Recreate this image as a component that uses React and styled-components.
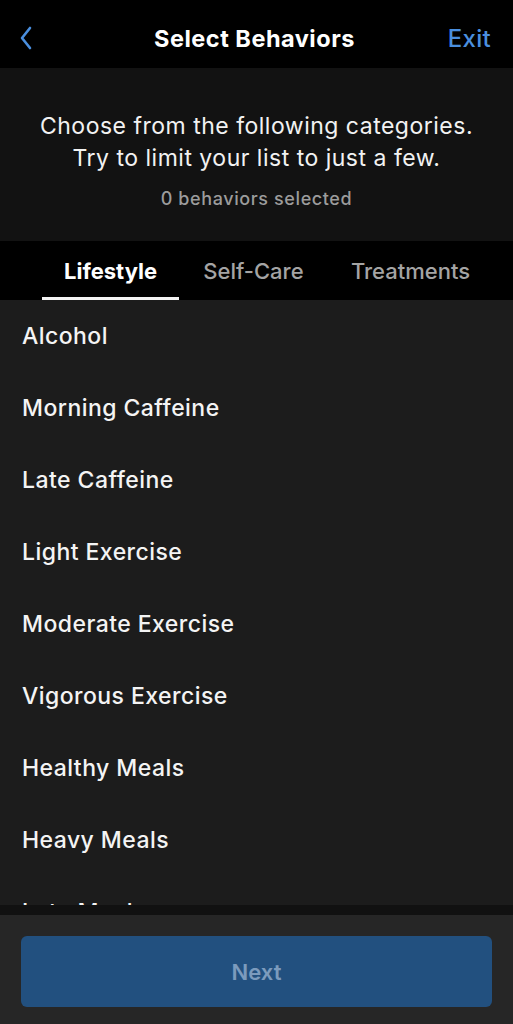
import React, { useState } from "react";
import styled, { createGlobalStyle } from "styled-components";

const GlobalStyle = createGlobalStyle`
  html, body {
    margin: 0;
    padding: 0;
    background: #000;
  }
  * {
    box-sizing: border-box;
  }
  body {
    font-family: Inter, "Liberation Sans", sans-serif;
    -webkit-font-smoothing: antialiased;
  }
`;

const Screen = styled.div`
  display: flex;
  flex-direction: column;
  width: 513px;
  height: 1024px;
  overflow: hidden;
  background: #1c1c1c;
`;

const NavBar = styled.div`
  display: grid;
  grid-template-columns: 80px 1fr 80px;
  align-items: center;
  height: 68px;
  padding: 8px 22px 0 18px;
  background: #000;
`;

const BackButton = styled.button`
  display: flex;
  align-items: center;
  padding: 0;
  border: none;
  background: none;
  color: #4a8fdf;
  cursor: pointer;
`;

const Title = styled.h1`
  margin: 0;
  text-align: center;
  color: #fff;
  font-size: 23.5px;
  font-weight: 700;
  letter-spacing: 0.5px;
`;

const ExitButton = styled.button`
  justify-self: end;
  padding: 0;
  border: none;
  background: none;
  color: #4a8fdf;
  font-family: inherit;
  font-size: 24px;
  font-weight: 500;
  letter-spacing: 0.3px;
  cursor: pointer;
`;

const Intro = styled.div`
  display: flex;
  flex-direction: column;
  align-items: center;
  height: 173px;
  padding-top: 42px;
  background: #121212;
`;

const IntroText = styled.p`
  margin: 0;
  text-align: center;
  color: #f2f2f2;
  font-size: 23px;
  font-weight: 400;
  letter-spacing: 0.5px;
  line-height: 32px;
`;

const Count = styled.p`
  margin: 14px 0 0;
  color: #9c9c9c;
  font-size: 18px;
  font-weight: 500;
  letter-spacing: 0.6px;
`;

const TabBar = styled.div`
  display: flex;
  align-items: stretch;
  height: 59px;
  padding-left: 42px;
  background: #000;
`;

const Tab = styled.button`
  display: flex;
  align-items: center;
  justify-content: center;
  padding: 3px 0 0;
  margin-right: ${(p) => p.$gap}px;
  width: ${(p) => p.$width}px;
  border: none;
  border-bottom: 3px solid ${(p) => (p.$active ? "#f4f4f4" : "transparent")};
  background: none;
  color: ${(p) => (p.$active ? "#fff" : "#a4a4a4")};
  font-family: inherit;
  font-size: 22px;
  font-weight: ${(p) => (p.$active ? 700 : 500)};
  cursor: pointer;
`;

const List = styled.ul`
  flex: 1;
  margin: 0;
  padding: 0;
  list-style: none;
  overflow: hidden;
  background: #1c1c1c;
`;

const Item = styled.li`
  display: flex;
  align-items: center;
  height: 72px;
  padding-left: 22px;
  color: #f4f4f4;
  font-size: 23px;
  font-weight: 500;
  letter-spacing: 0.45px;
`;

const Divider = styled.div`
  height: 10px;
  background: #111;
`;

const Footer = styled.div`
  height: 109px;
  padding: 21px 21px 0;
  background: #262626;
`;

const NextButton = styled.button`
  width: 100%;
  height: 71px;
  border: none;
  border-radius: 6px;
  background: #22507f;
  color: #7c9bbd;
  font-family: inherit;
  font-size: 22px;
  font-weight: 600;
`;

const tabs = [
  { name: "Lifestyle", width: 137, gap: 6 },
  { name: "Self-Care", width: 137, gap: 20 },
  { name: "Treatments", width: 137, gap: 0 },
];

const behaviors = [
  "Alcohol",
  "Morning Caffeine",
  "Late Caffeine",
  "Light Exercise",
  "Moderate Exercise",
  "Vigorous Exercise",
  "Healthy Meals",
  "Heavy Meals",
  "Late Meals",
  "Late Snacks",
];

const App = () => {
  const [active, setActive] = useState("Lifestyle");

  return (
    <>
      <GlobalStyle />
      <Screen>
        <NavBar>
          <BackButton aria-label="Back">
            <svg width="16" height="26" viewBox="0 0 16 26" fill="none">
              <path
                d="M12 3 L4 13 L12 23"
                stroke="currentColor"
                strokeWidth="2.6"
                strokeLinecap="round"
                strokeLinejoin="round"
              />
            </svg>
          </BackButton>
          <Title>Select Behaviors</Title>
          <ExitButton>Exit</ExitButton>
        </NavBar>
        <Intro>
          <IntroText>
            Choose from the following categories.
            <br />
            Try to limit your list to just a few.
          </IntroText>
          <Count>0 behaviors selected</Count>
        </Intro>
        <TabBar>
          {tabs.map((t) => (
            <Tab
              key={t.name}
              $width={t.width}
              $gap={t.gap}
              $active={active === t.name}
              onClick={() => setActive(t.name)}
            >
              {t.name}
            </Tab>
          ))}
        </TabBar>
        <List>
          {behaviors.map((b) => (
            <Item key={b}>{b}</Item>
          ))}
        </List>
        <Divider />
        <Footer>
          <NextButton disabled>Next</NextButton>
        </Footer>
      </Screen>
    </>
  );
};

export default App;
